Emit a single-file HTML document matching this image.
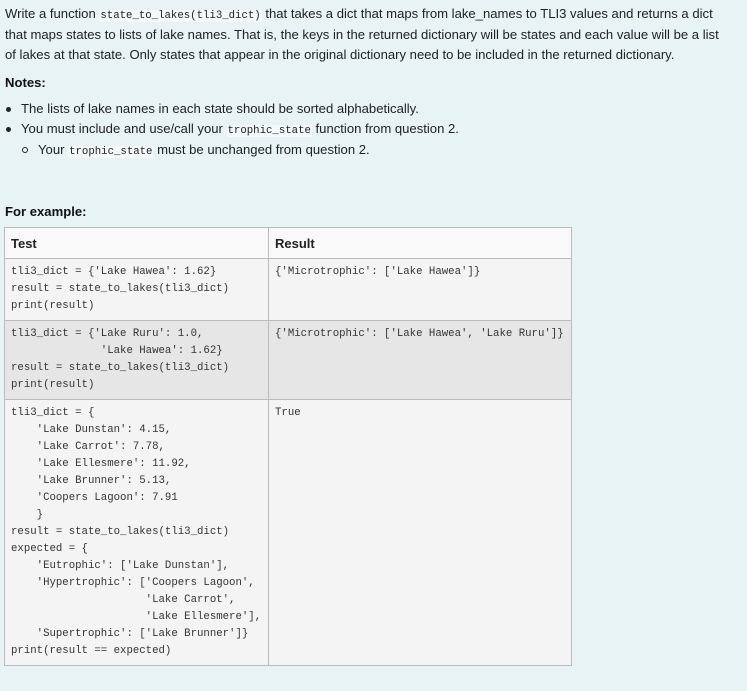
<!DOCTYPE html>
<html><head><meta charset="utf-8"><style>
body{margin:0;background:#e7f3f5;font-family:"Liberation Sans",sans-serif;font-size:13.1px;color:#222;width:747px;height:691px;overflow:hidden}
.p{position:absolute;left:5px;white-space:nowrap;line-height:20px}
code,.m{font-family:"Liberation Mono",monospace;font-size:10.7px}
code{background:#f4f8f9;padding:0 1px}
b{font-weight:bold;color:#111}
table{position:absolute;left:4px;top:227px;border-collapse:collapse;width:568px}
td,th{border:1px solid #bbb;vertical-align:top;text-align:left}
th{background:#f9f9f9;height:30px;padding:0 6px;font-size:13px;vertical-align:middle}
td{padding:5px 6px;font-family:"Liberation Mono",monospace;font-size:10.7px;line-height:17px;white-space:pre;color:#333}
tr.a td{background:#f4f4f4}
tr.b td{background:#e6e6e6}
tr.c td{background:#f4f4f4}
.dot{position:absolute;width:5px;height:5px;border-radius:50%;background:#222}
.ring{position:absolute;width:4px;height:4px;border-radius:50%;border:1px solid #222}
</style></head><body>
<div class="p" style="top:4px">Write a function <code>state_to_lakes(tli3_dict)</code> that takes a dict that maps from lake_names to TLI3 values and returns a dict</div>
<div class="p" style="top:25px">that maps states to lists of lake names. That is, the keys in the returned dictionary will be states and each value will be a list</div>
<div class="p" style="top:45px">of lakes at that state. Only states that appear in the original dictionary need to be included in the returned dictionary.</div>
<div class="p" style="top:73px"><b>Notes:</b></div>
<div class="dot" style="left:6px;top:107px"></div>
<div class="p" style="top:99px;left:21px">The lists of lake names in each state should be sorted alphabetically.</div>
<div class="dot" style="left:6px;top:127px"></div>
<div class="p" style="top:119px;left:21px">You must include and use/call your <code>trophic_state</code> function from question 2.</div>
<div class="ring" style="left:22px;top:147px"></div>
<div class="p" style="top:140px;left:38px">Your <code>trophic_state</code> must be unchanged from question 2.</div>
<div class="p" style="top:202px"><b>For example:</b></div>
<table>
<tr><th style="width:251px">Test</th><th>Result</th></tr>
<tr class="a"><td style="height:50px">tli3_dict = {'Lake Hawea': 1.62}
result = state_to_lakes(tli3_dict)
print(result)</td><td>{'Microtrophic': ['Lake Hawea']}</td></tr>
<tr class="b"><td style="height:68px">tli3_dict = {'Lake Ruru': 1.0,
              'Lake Hawea': 1.62}
result = state_to_lakes(tli3_dict)
print(result)</td><td>{'Microtrophic': ['Lake Hawea', 'Lake Ruru']}</td></tr>
<tr class="c"><td style="height:255px">tli3_dict = {
    'Lake Dunstan': 4.15,
    'Lake Carrot': 7.78,
    'Lake Ellesmere': 11.92,
    'Lake Brunner': 5.13,
    'Coopers Lagoon': 7.91
    }
result = state_to_lakes(tli3_dict)
expected = {
    'Eutrophic': ['Lake Dunstan'],
    'Hypertrophic': ['Coopers Lagoon',
                     'Lake Carrot',
                     'Lake Ellesmere'],
    'Supertrophic': ['Lake Brunner']}
print(result == expected)</td><td>True</td></tr>
</table>
</body></html>
